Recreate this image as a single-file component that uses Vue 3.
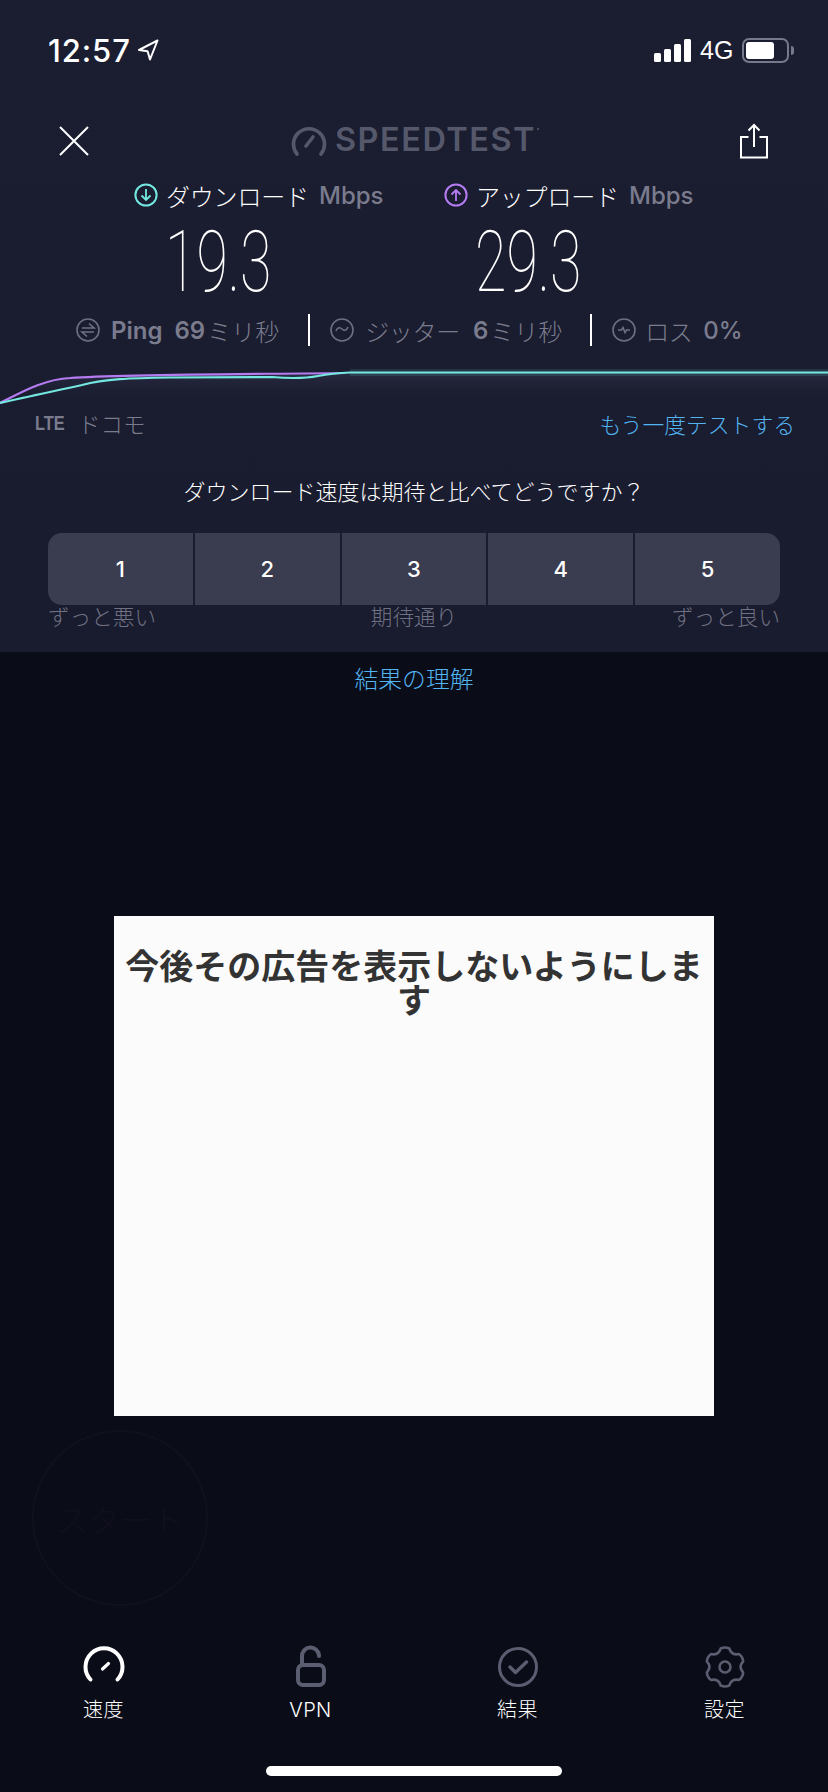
<script setup>
const rates = [1, 2, 3, 4, 5]
const navItems = [
  { key: 'speed', label: '速度', active: true },
  { key: 'vpn', label: 'VPN', active: false },
  { key: 'results', label: '結果', active: false },
  { key: 'settings', label: '設定', active: false }
]
function gearPath() {
  const cx = 20, cy = 20, R = 19, r = 13.5
  const p = (deg, rad) => {
    const t = (deg * Math.PI) / 180
    return `${(cx + rad * Math.cos(t)).toFixed(2)} ${(cy + rad * Math.sin(t)).toFixed(2)}`
  }
  let d = ''
  for (let i = 0; i < 6; i++) {
    const a = -90 + i * 60
    d += i === 0 ? `M${p(a - 13, R)} ` : `L${p(a - 13, R)} `
    d += `Q${p(a, R + 1.5)} ${p(a + 13, R)} `
    d += `Q${p(a + 30, r - 0.5)} ${p(a + 47, R)} `
  }
  return d + 'Z'
}
const gear = gearPath()
</script>

<template>
  <div class="screen">
    <section class="panel">
      <div class="status">
        <span class="time">12:57</span>
        <svg class="loc" width="22" height="22" viewBox="0 0 22 22"><path d="M20.5 1.5 2 11l8.6 1.2L13 20.5z" fill="none" stroke="#fff" stroke-width="2" stroke-linejoin="round"/></svg>
        <span class="grow"></span>
        <div class="bars"><i class="b1"></i><i class="b2"></i><i class="b3"></i><i class="b4"></i></div>
        <span class="net">4G</span>
        <div class="battery"><div class="fill"></div></div>
        <div class="nub"></div>
      </div>

      <div class="topnav">
        <svg width="32" height="32" viewBox="0 0 32 32"><path d="M2 2l28 28M30 2 2 30" stroke="#fff" stroke-width="2" fill="none"/></svg>
        <div class="logo">
          <svg width="36" height="30" viewBox="0 0 36 30"><path d="M6 28A15.5 15.5 0 1 1 30 28" fill="none" stroke="#55586a" stroke-width="3.6" stroke-linecap="round"/><path d="M15 20l7-9" stroke="#55586a" stroke-width="3.6" stroke-linecap="round"/></svg>
          <span class="logotext">SPEEDTEST</span><span class="reg"></span>
        </div>
        <svg width="30" height="36" viewBox="0 0 30 36"><path d="M9.5 14H2v20.5h26V14h-7.5M15 24V2M9.5 7.5 15 2l5.500 5.500" fill="none" stroke="#fff" stroke-width="2"/></svg>
      </div>

      <div class="metrics">
        <div class="metric">
          <div class="mlabel">
            <svg width="24" height="24" viewBox="0 0 24 24"><circle cx="12" cy="12" r="10.600" fill="none" stroke="#74e8e0" stroke-width="2"/><path d="M12 6v11M7.500 12.500 12 17l4.500-4.500" fill="none" stroke="#74e8e0" stroke-width="1.800"/></svg>
            <span class="jp">ダウンロード</span><span class="unit">Mbps</span>
          </div>
          <div class="num">19.3</div>
        </div>
        <div class="metric">
          <div class="mlabel">
            <svg width="24" height="24" viewBox="0 0 24 24"><circle cx="12" cy="12" r="10.600" fill="none" stroke="#b57cf2" stroke-width="2"/><path d="M12 18V7M7.500 11.500 12 7l4.500 4.500" fill="none" stroke="#b57cf2" stroke-width="1.800"/></svg>
            <span class="jp">アップロード</span><span class="unit">Mbps</span>
          </div>
          <div class="num">29.3</div>
        </div>
      </div>

      <div class="stats">
        <svg width="24" height="24" viewBox="0 0 24 24"><circle cx="12" cy="12" r="11" fill="none" stroke="#6e7082" stroke-width="1.600"/><path d="M6 10h12l-5-4.500M18 14H6l5 4.500" fill="none" stroke="#6e7082" stroke-width="1.600"/></svg>
        <b class="s-ping">Ping</b>
        <b class="s-val">69</b><span class="s-unit">ミリ秒</span>
        <i class="sep s1"></i>
        <svg width="24" height="24" viewBox="0 0 24 24"><circle cx="12" cy="12" r="11" fill="none" stroke="#6e7082" stroke-width="1.600"/><path d="M6 13c1.500-4 4-4 6-2s4.500 2 6-2" fill="none" stroke="#6e7082" stroke-width="1.600"/></svg>
        <span class="s-jit">ジッター</span>
        <b class="s-six">6</b><span class="s-unit">ミリ秒</span>
        <i class="sep s2"></i>
        <svg width="24" height="24" viewBox="0 0 24 24"><circle cx="12" cy="12" r="11" fill="none" stroke="#6e7082" stroke-width="1.600"/><path d="M6 12h3.500l1.500-2.500 2 5 1.500-2.500H18" fill="none" stroke="#6e7082" stroke-width="1.600"/></svg>
        <span class="s-los">ロス</span>
        <b class="s-zero">0%</b>
      </div>

      <svg class="graph" width="828" height="60" viewBox="0 352 828 60">
        <defs>
          <linearGradient id="glow" x1="0" y1="0" x2="0" y2="1">
            <stop offset="0" stop-color="#2a2e44" stop-opacity="0.9"/>
            <stop offset="1" stop-color="#1a1c2e" stop-opacity="0"/>
          </linearGradient>
        </defs>
        <path d="M0 403C25 392 45 379 70 378C120 374.500 200 374.500 340 373H828V396H0Z" fill="url(#glow)"/>
        <path d="M350 372.500H828" fill="none" stroke="#74e8e0" stroke-opacity="0.12" stroke-width="7"/>
        <path d="M0 403C22 392 45 379 70 378C120 374.500 200 374.500 345 373" fill="none" stroke="#b57cf2" stroke-width="2.200"/>
        <path d="M0 403C30 396 60 390 82 385C105 379 130 378 170 377.500L272 377C290 378.500 305 378.500 318 376C328 374 335 373 350 372.500H828" fill="none" stroke="#74e8e0" stroke-width="2.200"/>
      </svg>

      <div class="carrier">
        <span class="lte">LTE</span>
        <span class="docomo">ドコモ</span>
        <span class="grow"></span>
        <span class="retest">もう一度テストする</span>
      </div>

      <div class="question">ダウンロード速度は期待と比べてどうですか？</div>

      <div class="rates">
        <button v-for="r in rates" :key="r" class="rate">{{ r }}</button>
      </div>
      <div class="scale">
        <span>ずっと悪い</span><span>期待通り</span><span>ずっと良い</span>
      </div>
    </section>

    <section class="lower">
      <div class="understand">結果の理解</div>
      <div class="ad">
        <h2>今後その広告を表示しないようにします</h2>
      </div>
      <div class="start">スタート</div>
      <nav class="tabs">
        <div v-for="item in navItems" :key="item.key" class="tab">
          <svg width="44" height="44" viewBox="0 0 44 44">
            <template v-if="item.key === 'speed'">
              <path d="M8.500 36.500A18.500 18.500 0 1 1 35.500 36.500" fill="none" stroke="#fff" stroke-width="4" stroke-linecap="round" transform="translate(0 -2)"/>
              <path d="M20.500 24l6-5.500" stroke="#fff" stroke-width="3.200" stroke-linecap="round"/>
            </template>
            <template v-else-if="item.key === 'vpn'">
              <rect x="9" y="20" width="26" height="20" rx="5" fill="none" stroke="#5b5e70" stroke-width="4"/>
              <path d="M13 20v-8.500a8.500 8.500 0 0 1 17-1v.500" fill="none" stroke="#5b5e70" stroke-width="4" stroke-linecap="round"/>
            </template>
            <template v-else-if="item.key === 'results'">
              <circle cx="22" cy="22" r="18.500" fill="none" stroke="#5b5e70" stroke-width="3"/>
              <path d="M14 22l5.500 5.500L30.500 17" fill="none" stroke="#5b5e70" stroke-width="3.400" stroke-linecap="round" stroke-linejoin="round"/>
            </template>
            <template v-else>
              <g transform="translate(2 2)">
                <path :d="gear" fill="none" stroke="#5b5e70" stroke-width="2.600" stroke-linejoin="round"/>
                <circle cx="20" cy="20" r="5.500" fill="none" stroke="#5b5e70" stroke-width="2.600"/>
              </g>
            </template>
          </svg>
          <span class="tablabel">{{ item.label }}</span>
        </div>
      </nav>
      <div class="homebar"></div>
    </section>
  </div>
</template>

<style>
html, body { margin: 0; background: #0a0c18; }
</style>

<style scoped>
.screen {
  width: 828px;
  height: 1792px;
  overflow: hidden;
  display: flex;
  flex-direction: column;
  font-family: Inter, "Noto Sans CJK JP", sans-serif;
  color: #fff;
}
.panel {
  height: 652px;
  flex: none;
  background: linear-gradient(#1b1d30, #191b2e);
  display: flex;
  flex-direction: column;
}
.grow { flex: 1; }
.status {
  height: 100px;
  flex: none;
  display: flex;
  align-items: center;
  padding: 0 34px 0 48px;
  box-sizing: border-box;
}
.time { font: 500 31px/1 Inter, sans-serif; letter-spacing: 0.9px; width: 88px; white-space: nowrap; }
.loc { margin-left: 1px; }
.bars { display: flex; align-items: flex-end; gap: 3px; height: 23px; }
.bars i { display: block; width: 7px; background: #fff; border-radius: 1.5px; }
.b1 { height: 9px; }
.b2 { height: 13px; }
.b3 { height: 18px; }
.b4 { height: 23px; }
.net { font: 400 25px/1 "Liberation Sans", sans-serif; margin-left: 9px; width: 42px; }
.battery {
  width: 47px;
  height: 25px;
  box-sizing: border-box;
  border: 2px solid #77798a;
  border-radius: 7px;
  padding: 2px;
}
.fill { width: 28px; height: 100%; background: #fff; border-radius: 3px; }
.nub { width: 3px; height: 9px; background: #77798a; border-radius: 0 3px 3px 0; margin-left: 2px; }

.topnav {
  height: 79px;
  flex: none;
  display: flex;
  align-items: center;
  justify-content: space-between;
  padding: 2px 59px 0 58px;
  box-sizing: border-box;
}
.logo { display: flex; align-items: center; gap: 8px; margin-left: 1px; position: relative; }
.logotext { font: 600 32.500px/1 Inter, sans-serif; color: #55586a; letter-spacing: 1.5px; }
.reg { width: 2px; height: 2px; border-radius: 50%; background: #55586a; align-self: flex-start; margin: 4px 0 0 -7px; }

.metrics { display: grid; grid-template-columns: 310px 310px; margin-left: 134px; flex: none; }
.mlabel { height: 32px; display: flex; align-items: center; font-size: 24px; }
.jp { margin-left: 8px; font-weight: 300; width: 153px; letter-spacing: -0.2px; white-space: nowrap; }
.unit { color: #7a7c8e; font-weight: 500; font-size: 24px; }
.num {
  height: 99px;
  font: 100 85px/102px Roboto, sans-serif;
  padding-left: 31px;
  transform: scaleX(0.675);
  transform-origin: 31px 0;
  white-space: nowrap;
}

.stats {
  height: 40px;
  flex: none;
  display: flex;
  align-items: center;
  padding-left: 76px;
  color: #7a7c8e;
  font-size: 24px;
  white-space: nowrap;
}
.stats b { font-weight: 600; }
.s-ping { margin-left: 11px; }
.s-val { margin-left: 12px; }
.s-unit { margin-left: 2px; font-weight: 300; }
.sep { display: block; width: 2px; height: 32px; background: #fff; }
.s1 { margin: 0 20px 0 29px; }
.s2 { margin: 0 20px 0 28px; }
.s-jit { margin-left: 11px; font-weight: 300; letter-spacing: -0.300px; }
.s-six { margin-left: 13px; }
.s-los { margin-left: 9px; font-weight: 300; letter-spacing: -0.500px; }
.s-zero { margin-left: 11px; font-weight: 500 !important; }

.graph { display: block; flex: none; margin-top: 2px; }
.carrier {
  height: 26px;
  flex: none;
  display: flex;
  align-items: center;
  padding: 0 33px 0 35px;
  margin-top: -2px;
}
.lte { font: 700 20px/1 "Liberation Sans Narrow", "Liberation Sans", sans-serif; color: #7a7c8e; transform: scaleX(0.82); transform-origin: left; width: 43px; }
.docomo { font-size: 22.500px; font-weight: 300; color: #7a7c8e; }
.retest { font-size: 21.800px; font-weight: 300; color: #52b4f0; }

.question {
  margin-top: 34px;
  height: 44px;
  flex: none;
  text-align: center;
  font-size: 22px;
  line-height: 44px;
  font-weight: 300;
}
.rates {
  margin: 19px 48px 0;
  height: 72px;
  flex: none;
  display: grid;
  grid-template-columns: repeat(5, 1fr);
  gap: 2px;
  border-radius: 14px;
  overflow: hidden;
}
.rate {
  border: 0;
  padding: 0;
  background: #3a3c50;
  color: #fff;
  font: 500 22px/1 Inter, sans-serif;
}
.scale {
  margin: 0 48px;
  height: 20px;
  flex: none;
  display: flex;
  justify-content: space-between;
  align-items: center;
  font-size: 21.600px;
  font-weight: 300;
  color: #6f7182;
}

.lower {
  flex: 1;
  background: #0a0c18;
  display: flex;
  flex-direction: column;
}
.understand {
  height: 54px;
  flex: none;
  text-align: center;
  line-height: 56px;
  font-size: 23.800px;
  font-weight: 300;
  color: #52b4f0;
}
.ad {
  margin: 210px 114px 0;
  height: 500px;
  flex: none;
  box-sizing: border-box;
  background: #fbfbfb;
  padding: 32px 4px 0;
}
.ad h2 {
  margin: 0;
  text-align: center;
  color: #333;
  font: 700 34px/33.500px "Noto Sans CJK JP", sans-serif;
}
.start {
  margin: 14px 0 0 32px;
  width: 176px;
  height: 176px;
  flex: none;
  box-sizing: border-box;
  border: 2px solid #10111f;
  border-radius: 50%;
  display: flex;
  align-items: center;
  justify-content: center;
  color: #11101e;
  font-size: 32px;
  font-weight: 300;
  white-space: nowrap;
}
.tabs {
  margin-top: 39px;
  height: 92px;
  flex: none;
  display: grid;
  grid-template-columns: repeat(4, 207px);
}
.tab { display: flex; flex-direction: column; align-items: center; }
.tablabel { margin-top: 7px; font-size: 20px; line-height: 28px; font-weight: 300; letter-spacing: 0.4px; }
.homebar {
  margin: 29px auto 0;
  width: 296px;
  height: 10px;
  flex: none;
  background: #fff;
  border-radius: 5px;
}
</style>
